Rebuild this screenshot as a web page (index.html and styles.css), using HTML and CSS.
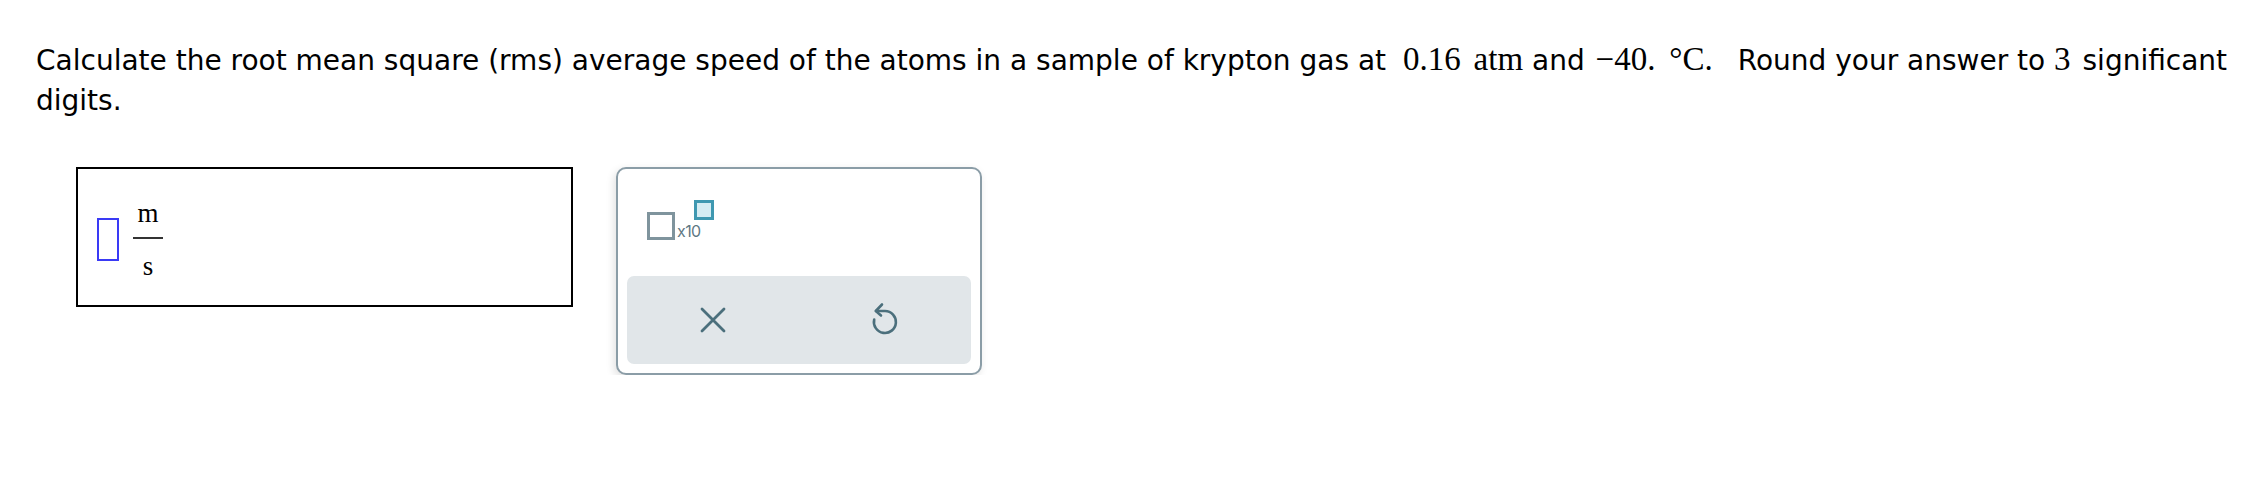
FILE: index.html
```html
<!DOCTYPE html>
<html>
<head>
<meta charset="utf-8">
<link rel="stylesheet" href="styles.css">
</head>
<body>
<div class="page">
  <p class="question">Calculate the root mean square (rms) average speed of the atoms in a sample of krypton gas at <span class="m m-num">0.16</span> <span class="m m-unit">atm</span> and <span class="m m-temp">&minus;40.</span> <span class="m m-deg">&deg;C.</span> Round your answer to <span class="m m-sig">3</span> significant digits.</p>
  <div class="answer-row">
    <div class="answer-box">
      <span class="blank"></span>
      <span class="frac">
        <span class="num">m</span>
        <span class="bar"></span>
        <span class="den">s</span>
      </span>
    </div>
    <div class="palette">
      <div class="palette-top">
        <div class="exp">
          <span class="exp-base"></span>
          <span class="exp-text">x10</span>
          <span class="exp-sup"></span>
        </div>
      </div>
      <div class="palette-actions">
        <div class="action">
          <svg width="26" height="26" viewBox="0 0 26 26"><path d="M2 2 L24 24 M24 2 L2 24" stroke="#4b6f7c" stroke-width="2.8" stroke-linecap="round" fill="none"/></svg>
        </div>
        <div class="action">
          <svg width="28" height="36" viewBox="0 0 28 36"><path d="M5 9 H14 A11 11 0 1 1 3.2 17.5" stroke="#4b6f7c" stroke-width="2.6" stroke-linecap="round" fill="none"/><path d="M11 2.5 L4.8 9 L10 13.5" stroke="#4b6f7c" stroke-width="2.6" stroke-linecap="round" stroke-linejoin="round" fill="none"/></svg>
        </div>
      </div>
    </div>
  </div>
</div>
</body>
</html>
```
FILE: styles.css
```css
html, body {
  margin: 0;
  padding: 0;
  background: #ffffff;
}
.page {
  padding: 39px 0 0 36px;
}
.question {
  margin: 0;
  width: 2222px;
  font-family: "DejaVu Sans", Verdana, sans-serif;
  font-size: 28px;
  line-height: 40px;
  color: #000;
}
.m {
  font-family: "Liberation Serif", "Times New Roman", serif;
  font-size: 33px;
}
.m-num {
  margin-left: 8px;
  margin-right: 4px;
}
.m-temp {
  margin-left: 2px;
  margin-right: 5px;
}
.m-deg {
  margin-right: 16px;
}
.m-sig {
  margin-right: 3px;
}
.answer-row {
  display: flex;
  align-items: flex-start;
  gap: 43px;
  margin-top: 46px;
  margin-left: 40px;
}
.answer-box {
  box-sizing: border-box;
  width: 497px;
  height: 140px;
  border: 2px solid #000;
  display: flex;
  align-items: flex-start;
  padding-left: 19px;
  gap: 14px;
}
.blank {
  box-sizing: border-box;
  width: 22px;
  height: 43px;
  border: 2px solid #3a3af5;
  margin-top: 49px;
}
.frac {
  display: flex;
  flex-direction: column;
  align-items: center;
  margin-top: 31px;
  font-family: "Liberation Serif", "Times New Roman", serif;
  font-size: 27px;
  line-height: 27px;
  color: #000;
}
.bar {
  width: 30px;
  height: 2px;
  background: #333;
  margin: 10px 0 14px;
}
.palette {
  box-sizing: border-box;
  width: 366px;
  height: 208px;
  border: 2px solid #8b9da7;
  border-radius: 10px;
  box-shadow: -2px 3px 8px rgba(0, 0, 0, 0.12);
  padding: 9px;
  display: flex;
  flex-direction: column;
  background: #fff;
}
.palette-top {
  flex: 1;
  padding: 22px 0 0 20px;
}
.exp {
  display: flex;
  align-items: flex-start;
}
.exp-base {
  box-sizing: border-box;
  width: 28px;
  height: 28px;
  border: 3px solid #7f949d;
  margin-top: 12px;
}
.exp-text {
  font-family: "Inter", "Open Sans", sans-serif;
  font-size: 16px;
  letter-spacing: -0.6px;
  color: #5e7884;
  margin-top: 21px;
  margin-left: 2px;
  line-height: 20px;
}
.exp-sup {
  box-sizing: border-box;
  width: 20px;
  height: 20px;
  border: 3px solid #3f98b1;
  background: #d5ecf3;
  margin-left: -7px;
}
.palette-actions {
  height: 88px;
  background: #e1e6e9;
  border-radius: 7px;
  display: flex;
}
.action {
  flex: 1;
  display: flex;
  align-items: center;
  justify-content: center;
}
```
